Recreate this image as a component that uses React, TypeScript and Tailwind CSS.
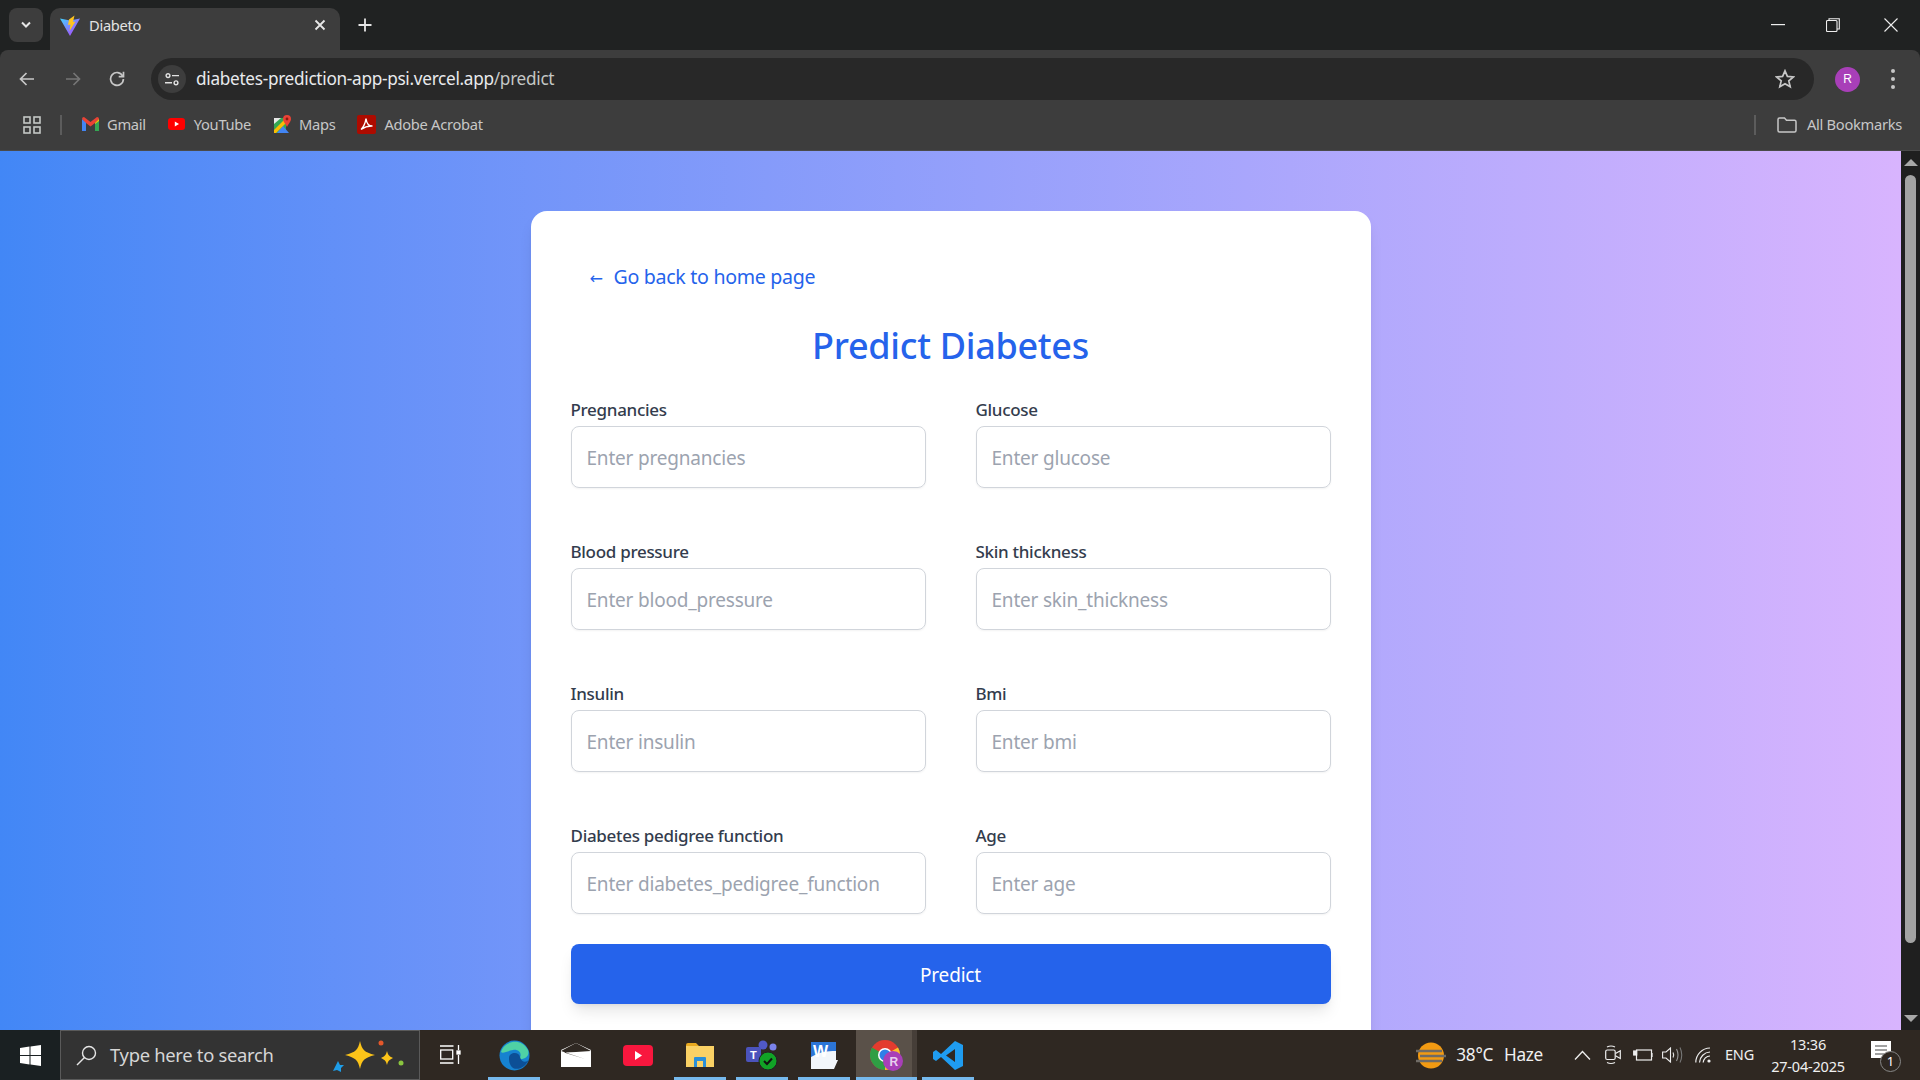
const fields = [
  { label: 'Pregnancies', key: 'pregnancies' },
  { label: 'Glucose', key: 'glucose' },
  { label: 'Blood pressure', key: 'blood_pressure' },
  { label: 'Skin thickness', key: 'skin_thickness' },
  { label: 'Insulin', key: 'insulin' },
  { label: 'Bmi', key: 'bmi' },
  { label: 'Diabetes pedigree function', key: 'diabetes_pedigree_function' },
  { label: 'Age', key: 'age' },
];

function ViteIcon() {
  return (
    <svg width="20" height="21" viewBox="0 0 20 21">
      <defs>
        <linearGradient id="vite" x1="0" y1="0" x2="1" y2="1">
          <stop offset="0" stopColor="#41d1ff" />
          <stop offset="1" stopColor="#bd34fe" />
        </linearGradient>
      </defs>
      <path d="M0 3.5 L10 5.5 L20 3.5 L10 21 Z" fill="url(#vite)" />
      <path d="M9 4.5 L14.5 0.5 L13 7 L15.5 6.5 L9.5 16 L10.5 9.5 L8 10 Z" fill="#ffc41f" />
    </svg>
  );
}

function GmailIcon() {
  return (
    <svg width="17" height="14" viewBox="0 0 17 14">
      <path d="M0 2 L0 14 L4 14 L4 5 Z" fill="#4285f4" />
      <path d="M17 2 L17 14 L13 14 L13 5 Z" fill="#34a853" />
      <path d="M0 2 Q0 0 2 0 L8.5 5 L15 0 Q17 0 17 2 L13 6 L8.5 9.5 L4 6 Z" fill="#ea4335" />
      <path d="M13 6 L17 2 L17 4 L13 7 Z" fill="#fbbc04" />
    </svg>
  );
}

function YoutubeIcon() {
  return (
    <svg width="17" height="12" viewBox="0 0 17 12">
      <rect width="17" height="12" rx="3" fill="#ff0000" />
      <path d="M6.8 3.4 L11 6 L6.8 8.6 Z" fill="#fff" />
    </svg>
  );
}

function MapsIcon() {
  return (
    <svg width="17" height="18" viewBox="0 0 17 18">
      <path d="M0 3 H12 V18 H0 Z" fill="#34a853" />
      <path d="M3 18 L9 11 L15 18 Z" fill="#4285f4" />
      <path d="M0 15 L10 5 L12 8 L2 18 H0 Z" fill="#fbbc04" />
      <path d="M0 3 H7 L0 9 Z" fill="#e8e8e8" />
      <path d="M13 0 A4 4 0 0 1 17 4 C17 7 14 9 13 12 C12 9 9 7 9 4 A4 4 0 0 1 13 0 Z" fill="#ea4335" />
      <circle cx="13" cy="4" r="1.4" fill="#8c1a11" />
    </svg>
  );
}

function AcrobatIcon() {
  return (
    <svg width="19" height="19" viewBox="0 0 19 19">
      <rect width="19" height="19" rx="2" fill="#ad0b00" />
      <path d="M4 14.5 C6 13 8.5 8 9 3.5 C9.5 8 11.5 11 15.5 11 C11.5 10.8 7.5 12 4 14.5 Z" fill="none" stroke="#fff" strokeWidth="1.4" />
    </svg>
  );
}

function AppsIcon() {
  return (
    <svg width="18" height="18" viewBox="0 0 18 18" fill="none" stroke="#c4c7c5" strokeWidth="1.6">
      <rect x="1" y="1" width="6" height="6" />
      <rect x="11" y="1" width="6" height="6" />
      <rect x="1" y="11" width="6" height="6" />
      <rect x="11" y="11" width="6" height="6" />
    </svg>
  );
}

function Bookmark({ icon, label, className }: { icon: React.ReactNode; label: string; className: string }) {
  return (
    <div className={`flex items-center ${className}`}>
      {icon}
      <span className="text-[14.7px] text-[#c7c7c7] font-['Noto_Sans',sans-serif] tracking-[-0.3px]">{label}</span>
    </div>
  );
}

function TabStrip() {
  return (
    <div className="h-[50px] bg-[#202222] flex items-end shrink-0">
      <div className="w-[34px] h-[34px] ml-[9px] mb-[8px] rounded-lg bg-[#3d3d3d] flex items-center justify-center">
        <svg width="12" height="8" viewBox="0 0 12 8" fill="none" stroke="#e6e6e6" strokeWidth="2">
          <path d="M2 1.5 L6 5.5 L10 1.5" />
        </svg>
      </div>
      <div className="w-[290px] h-[42px] ml-[7px] rounded-t-[10px] bg-[#3d3d3d] flex items-center pl-[10px] pr-[14px] pb-[8px]">
        <ViteIcon />
        <span className="ml-[9px] text-[14.7px] text-[#e3e3e3] font-['Noto_Sans',sans-serif] tracking-[-0.3px]">Diabeto</span>
        <svg className="ml-auto" width="12" height="12" viewBox="0 0 12 12" stroke="#e8e8e8" strokeWidth="1.8">
          <path d="M1.5 1.5 L10.5 10.5 M10.5 1.5 L1.5 10.5" />
        </svg>
      </div>
      <svg className="ml-[18px] mb-[18px]" width="14" height="14" viewBox="0 0 14 14" stroke="#e6e6e6" strokeWidth="1.8">
        <path d="M7 0.5 V13.5 M0.5 7 H13.5" />
      </svg>
      <div className="ml-auto flex items-center h-full">
        <svg className="mr-[41px]" width="14" height="2" viewBox="0 0 14 2">
          <rect width="14" height="1.2" fill="#eee" />
        </svg>
        <svg className="mr-[44px]" width="14" height="14" viewBox="0 0 14 14" fill="none" stroke="#eee" strokeWidth="1.1">
          <rect x="0.5" y="2.5" width="10.5" height="11" rx="1" />
          <path d="M3 2.5 V0.8 H13.3 V11 H11" />
        </svg>
        <svg className="mr-[22px]" width="14" height="14" viewBox="0 0 14 14" stroke="#eee" strokeWidth="1.1">
          <path d="M0.5 0.5 L13.5 13.5 M13.5 0.5 L0.5 13.5" />
        </svg>
      </div>
    </div>
  );
}

function Toolbar() {
  return (
    <div className="h-[58px] bg-[#3d3d3d] rounded-t-lg flex items-center shrink-0">
      <svg className="ml-[19px]" width="15" height="14" viewBox="0 0 15 14" fill="none" stroke="#c7c7c7" strokeWidth="1.7">
        <path d="M15 7 H1.5 M7.5 1 L1.5 7 L7.5 13" />
      </svg>
      <svg className="ml-[32px]" width="15" height="14" viewBox="0 0 15 14" fill="none" stroke="#757575" strokeWidth="1.7">
        <path d="M0 7 H13.5 M7.5 1 L13.5 7 L7.5 13" />
      </svg>
      <svg className="ml-[28px]" width="16" height="16" viewBox="0 0 16 16" fill="none" stroke="#c7c7c7" strokeWidth="1.7">
        <path d="M13.7 5 A6.4 6.4 0 1 0 14.4 8" />
        <path d="M14.5 0.8 V5.6 H9.7" />
      </svg>
      <div className="ml-[26px] w-[1663px] h-[42px] rounded-full bg-[#282828] flex items-center pl-[7px] pr-[19px]">
        <div className="w-[28px] h-[28px] rounded-full bg-[#3d3d3d] flex items-center justify-center">
          <svg width="14" height="13" viewBox="0 0 14 13" fill="none" stroke="#e3e3e3" strokeWidth="1.4">
            <circle cx="3" cy="2.6" r="1.9" />
            <path d="M7 2.6 H14 M0 9.8 H7" />
            <circle cx="11" cy="9.8" r="1.9" />
          </svg>
        </div>
        <span className="ml-[10px] text-[17.2px] text-[#e8eaed] font-['Noto_Sans',sans-serif] tracking-[-0.3px]">
          diabetes-prediction-app-psi.vercel.app<span className="text-[#c4c7c5]">/predict</span>
        </span>
        <svg className="ml-auto" width="20" height="20" viewBox="0 0 20 20" fill="none" stroke="#c7c7c7" strokeWidth="1.7">
          <path d="M10 1.8 L12.4 7.4 L18.4 7.9 L13.8 11.9 L15.2 17.8 L10 14.7 L4.8 17.8 L6.2 11.9 L1.6 7.9 L7.6 7.4 Z" />
        </svg>
      </div>
      <div className="ml-[21px] w-[25px] h-[25px] rounded-full bg-[#a83fb8] flex items-center justify-center text-[12px] text-white font-['Liberation_Sans',sans-serif]">
        R
      </div>
      <div className="ml-[31px] flex flex-col gap-[4px]">
        <div className="w-[4px] h-[4px] rounded-full bg-[#c7c7c7]" />
        <div className="w-[4px] h-[4px] rounded-full bg-[#c7c7c7]" />
        <div className="w-[4px] h-[4px] rounded-full bg-[#c7c7c7]" />
      </div>
    </div>
  );
}

function BookmarksBar() {
  return (
    <div className="h-[43px] bg-[#3d3d3d] border-b border-[#4a4a4a] flex items-center shrink-0 pb-[9px]">
      <div className="ml-[23px] flex"><AppsIcon /></div>
      <div className="ml-[19px] w-[2px] h-[20px] bg-[#5c5c5c]" />
      <Bookmark className="ml-[20px] gap-[8px]" icon={<GmailIcon />} label="Gmail" />
      <Bookmark className="ml-[22px] gap-[9px]" icon={<YoutubeIcon />} label="YouTube" />
      <Bookmark className="ml-[23px] gap-[8px]" icon={<MapsIcon />} label="Maps" />
      <Bookmark className="ml-[22px] gap-[8px]" icon={<AcrobatIcon />} label="Adobe Acrobat" />
      <div className="ml-auto w-[2px] h-[20px] bg-[#5c5c5c]" />
      <svg className="ml-[21px]" width="20" height="16" viewBox="0 0 20 16" fill="none" stroke="#c7c7c7" strokeWidth="1.5">
        <path d="M1 2.5 Q1 1 2.5 1 H7.5 L9.5 3.2 H17.5 Q19 3.2 19 4.7 V13.5 Q19 15 17.5 15 H2.5 Q1 15 1 13.5 Z" />
      </svg>
      <span className="ml-[10px] mr-[18px] text-[14.7px] text-[#c7c7c7] font-['Noto_Sans',sans-serif] tracking-[-0.3px]">All Bookmarks</span>
    </div>
  );
}

function Scrollbar() {
  return (
    <div className="w-[19px] bg-[#1f1f1f] flex flex-col items-center shrink-0 pt-[8px] pb-[8px]">
      <div className="w-0 h-0 border-x-[7px] border-x-transparent border-b-[7px] border-b-[#a8a8a8]" />
      <div className="w-[11px] h-[768px] mt-[9px] rounded-full bg-[#a3a3a3]" />
      <div className="mt-auto w-0 h-0 border-x-[7px] border-x-transparent border-t-[7px] border-t-[#a8a8a8]" />
    </div>
  );
}

function PredictCard() {
  return (
    <div className="w-[840px] mx-auto mt-[60px] h-[900px] shrink-0 bg-white rounded-2xl shadow-lg px-[40px] pt-[50px] font-['Noto_Sans',sans-serif]">
      <a className="block h-[32px] ml-[19px] text-[19.6px] leading-[32px] text-[#2563eb] tracking-[-0.3px]">
        <span className="inline-block w-[24px] font-['DejaVu_Sans',sans-serif] text-[16px] leading-none">←</span>Go back to home page
      </a>
      <h1 className="mt-[27px] text-center text-[36px] leading-[52px] font-medium text-[#2563eb] tracking-[-0.3px]">Predict Diabetes</h1>
      <div className="mt-[24px] grid grid-cols-2 gap-x-[50px] gap-y-[50px]">
        {fields.map((f) => (
          <div key={f.key}>
            <label className="block h-[30px] text-[17px] leading-[27px] font-medium text-[#333c4d] tracking-[-0.3px]">{f.label}</label>
            <input
              readOnly
              placeholder={`Enter ${f.key}`}
              className="w-full h-[62px] px-[15px] pt-[2px] border border-[#d1d5db] rounded-lg text-[19px] placeholder:text-[#9ca3af] shadow-xs tracking-[-0.2px]"
            />
          </div>
        ))}
      </div>
      <button className="mt-[30px] w-full h-[60px] pt-[2px] rounded-lg bg-[#2563eb] text-white text-[19px] shadow-lg tracking-[-0.2px]">Predict</button>
    </div>
  );
}

function TaskIcon({ children, active }: { children: React.ReactNode; active?: boolean }) {
  return (
    <div className="relative w-[62px] h-full flex items-center justify-center">
      {children}
      {active && <div className="absolute bottom-0 left-[5px] right-[5px] h-[3px] bg-[#76b9ed]" />}
    </div>
  );
}

function Taskbar() {
  return (
    <div className="h-[50px] shrink-0 bg-[#2f2822] flex items-stretch text-white font-['Noto_Sans',sans-serif]">
      <div className="w-[60px] bg-[#1a2022] flex items-center justify-center">
        <svg width="21" height="21" viewBox="0 0 21 21" fill="#fff">
          <path d="M0 3 L9.5 1.6 V10 H0 Z M10.5 1.4 L21 0 V10 H10.5 Z M0 11 H9.5 V19.4 L0 18 Z M10.5 11 H21 V21 L10.5 19.6 Z" />
        </svg>
      </div>
      <div className="w-[360px] bg-[#333333] border border-[#5a5a5a] flex items-center pl-[15px] relative">
        <svg width="21" height="21" viewBox="0 0 21 21" fill="none" stroke="#e6e6e6" strokeWidth="1.4">
          <circle cx="13" cy="8" r="6.5" />
          <path d="M8.5 12.5 L1 20" />
        </svg>
        <span className="ml-[13px] text-[18.4px] text-[#d6d6d6] tracking-[-0.3px]">Type here to search</span>
        <svg className="absolute right-[12px] top-[8px]" width="76" height="34" viewBox="0 0 76 34">
          <path d="M29 2 C31 11 33 13 44 16 C33 19 31 21 29 30 C27 21 25 19 14 16 C25 13 27 11 29 2 Z" fill="#fcc419" />
          <path d="M56 12 C57 16 58 17 62 19 C58 21 57 22 56 26 C55 22 54 21 50 19 C54 17 55 16 56 12 Z" fill="#fcc419" />
          <path d="M7 22 L9 26 L13 26 L10 29 L10 33 L6 31 L2 32 L4 28 Z" fill="#1e9de8" />
          <circle cx="50" cy="4" r="2.5" fill="#e4572a" />
          <circle cx="70" cy="24" r="2.5" fill="#8ac53f" />
        </svg>
      </div>
      <div className="w-[60px] mr-[3px] flex items-center justify-center">
        <svg width="21" height="20" viewBox="0 0 21 20" fill="none" stroke="#fff" strokeWidth="1.3">
          <rect x="0.7" y="5" width="12" height="9" />
          <path d="M0 1 H13.5 M0 18 H13.5 M18.5 0 V5 M18.5 10 V19" />
          <rect x="17" y="6" width="3" height="3" fill="#fff" />
        </svg>
      </div>
      <TaskIcon active>
        <svg width="31" height="31" viewBox="0 0 31 31">
          <circle cx="15.5" cy="15.5" r="15" fill="#1682d0" />
          <path d="M2 12 C5 1 22 -3 29 10 C31 16 26 20 20 19 C24 14 20 9 14 10 C8 11 4 14 2 12 Z" fill="#4fd1a5" />
          <path d="M10 18 C10 12 20 11 21 17 C23 24 29 22 30 19 C27 28 16 32 12 26 C10 23 10 20 10 18 Z" fill="#0c4f96" />
        </svg>
      </TaskIcon>
      <TaskIcon>
        <svg width="30" height="24" viewBox="0 0 30 24">
          <path d="M0 7 L15 0 L30 7 L30 24 L0 24 Z" fill="#fff" />
          <path d="M0 8 L15 0 L30 8 L15 9 L3 9.5 L24 16 Z" fill="#2f2822" />
        </svg>
      </TaskIcon>
      <TaskIcon>
        <svg width="30" height="21" viewBox="0 0 30 21">
          <rect width="30" height="21" rx="4" fill="#f8173e" />
          <path d="M12 6 L19 10.5 L12 15 Z" fill="#fff" />
        </svg>
      </TaskIcon>
      <TaskIcon active>
        <svg width="28" height="24" viewBox="0 0 28 24">
          <path d="M0 2 Q0 0 2 0 H10 L13 3 H28 V24 H0 Z" fill="#e8a920" />
          <rect y="3" width="28" height="21" fill="#fad165" />
          <path d="M8 24 V15 Q8 14 9 14 H19 Q20 14 20 15 V24 H17 V18 H11 V24 Z" fill="#2a8fd8" />
        </svg>
      </TaskIcon>
      <TaskIcon active>
        <svg width="32" height="30" viewBox="0 0 32 30">
          <circle cx="17" cy="5" r="4.5" fill="#5059c9" />
          <circle cx="27" cy="7" r="3.5" fill="#7b83eb" />
          <rect x="0" y="7" width="15" height="15" rx="2" fill="#4b53bc" />
          <text x="4" y="19" fontSize="11" fill="#fff" fontFamily="Liberation Sans" fontWeight="700">T</text>
          <circle cx="22" cy="21" r="9" fill="#11a226" stroke="#222" strokeWidth="1" />
          <path d="M18 21 L21 24 L26 18.5" fill="none" stroke="#111" strokeWidth="2" />
        </svg>
      </TaskIcon>
      <TaskIcon active>
        <svg width="28" height="27" viewBox="0 0 28 27">
          <path d="M1 0 H26 V18 L28 18 L24 27 H1 Z" fill="#f2f6fb" />
          <path d="M1 0 H26 V9 Q12 8 1 15 Z" fill="#2c75d6" />
          <text x="3" y="15" fontSize="16" fill="#fff" fontFamily="Liberation Sans" fontWeight="700">W</text>
        </svg>
      </TaskIcon>
      <div className="relative w-[61px] ml-[1px] bg-[#5a5149] flex items-center justify-center">
        <svg width="33" height="31" viewBox="0 0 33 31">
          <circle cx="15" cy="15" r="15" fill="#e33b2e" />
          <path d="M15 15 L28 7.5 A15 15 0 0 1 15 30 Z" fill="#fbc02d" />
          <path d="M15 15 L15 30 A15 15 0 0 1 2 7.5 Z" fill="#2f9e44" />
          <circle cx="15" cy="15" r="7" fill="#fff" />
          <circle cx="15" cy="15" r="5.5" fill="#2f7fe8" />
          <circle cx="23" cy="21" r="10" fill="#a83fb8" />
          <text x="19.5" y="25.5" fontSize="12" fill="#e8d0ee" fontFamily="Liberation Sans" fontWeight="700">R</text>
        </svg>
        <div className="absolute right-0 top-0 bottom-0 w-[5px] bg-[#463e38]" />
        <div className="absolute bottom-0 left-0 right-0 h-[3px] bg-[#76b9ed]" />
      </div>
      <TaskIcon active>
        <svg width="31" height="31" viewBox="0 0 31 31">
          <path d="M22 1 L30 5 V26 L22 30 L8 17 L3 21 L0 19 V12 L3 10 L8 14 Z M22 9 L13 15.5 L22 22 Z" fill="#1f9cf0" fillRule="evenodd" />
        </svg>
      </TaskIcon>
      <div className="ml-auto flex items-center h-full text-[#f0f0f0]">
        <svg width="30" height="27" viewBox="0 0 30 27">
          <circle cx="15" cy="13.5" r="13" fill="#f29a12" />
          <path d="M0 9 H26 M4 14 H30 M0 19 H26" stroke="#6f6b66" strokeWidth="2.4" />
        </svg>
        <span className="ml-[10px] text-[17.2px] tracking-[-0.3px]">38°C</span>
        <span className="ml-[11px] text-[17.2px] tracking-[-0.3px]">Haze</span>
        <svg className="ml-[31px]" width="17" height="10" viewBox="0 0 17 10" fill="none" stroke="#eee" strokeWidth="1.3">
          <path d="M1 9.5 L8.5 1.5 L16 9.5" />
        </svg>
        <svg className="ml-[14px]" width="16" height="20" viewBox="0 0 16 20" fill="none" stroke="#eee" strokeWidth="1.2">
          <rect x="0.7" y="5" width="9.5" height="9.5" rx="1.5" />
          <path d="M10.5 8.5 L15.3 5.8 V13.5 L10.5 10.8 M2 2 Q6 0 10 2 M2 17.5 Q6 19.5 10 17.5" />
        </svg>
        <svg className="ml-[12px]" width="20" height="14" viewBox="0 0 20 14" fill="none" stroke="#eee" strokeWidth="1.2">
          <rect x="3.5" y="2" width="15" height="10" />
          <rect x="0.7" y="3" width="3" height="4" fill="#eee" />
          <path d="M19 5 V9" />
        </svg>
        <svg className="ml-[9px]" width="21" height="16" viewBox="0 0 21 16" fill="none" stroke="#eee" strokeWidth="1.1">
          <path d="M0.6 5 H4 L8.5 1 V15 L4 11 H0.6 Z" />
          <path d="M11 5.5 Q12.5 8 11 10.5" />
          <path d="M14.5 2 Q17.5 8 14.5 14" stroke="#999" />
          <path d="M18 0.5 Q21.5 8 18 15.5" stroke="#777" />
        </svg>
        <svg className="ml-[12px]" width="17" height="16" viewBox="0 0 17 16" fill="none" stroke="#eee" strokeWidth="1.2">
          <path d="M0.8 15.5 A14.5 14.5 0 0 1 15 1 M4.5 15.5 A11 11 0 0 1 15 5 M8.2 15.5 A7 7 0 0 1 15 9" />
          <circle cx="14" cy="14" r="1.6" fill="#eee" stroke="none" />
        </svg>
        <span className="ml-[13px] text-[14.5px] tracking-[-0.2px]">ENG</span>
        <div className="ml-[14px] w-[80px] flex flex-col items-center text-[14.5px] leading-[22px] tracking-[-0.2px]">
          <span>13:36</span>
          <span>27-04-2025</span>
        </div>
        <div className="relative ml-[23px] mr-[22px] w-[27px] h-[36px]">
          <svg className="absolute left-0 top-[4px]" width="20" height="17" viewBox="0 0 20 17">
            <path d="M0 0 H20 V17 H0 Z" fill="#fff" />
            <path d="M4 5 H16 M4 9 H16 M4 13 H13" stroke="#444" strokeWidth="1.2" />
          </svg>
          <div className="absolute left-[9px] top-[14px] w-[21px] h-[21px] rounded-full bg-[#2f2822] border border-[#888] flex items-center justify-center text-[13px] text-white">
            1
          </div>
        </div>
      </div>
    </div>
  );
}

export default function App() {
  return (
    <div className="w-[1920px] h-[1080px] flex flex-col overflow-hidden bg-[#202222]">
      <TabStrip />
      <Toolbar />
      <BookmarksBar />
      <div className="flex-1 min-h-0 flex">
        <main className="flex-1 min-w-0 overflow-hidden flex flex-col bg-linear-to-r from-[#4287f6] to-[#d8b4fe]">
          <PredictCard />
        </main>
        <Scrollbar />
      </div>
      <Taskbar />
    </div>
  );
}
